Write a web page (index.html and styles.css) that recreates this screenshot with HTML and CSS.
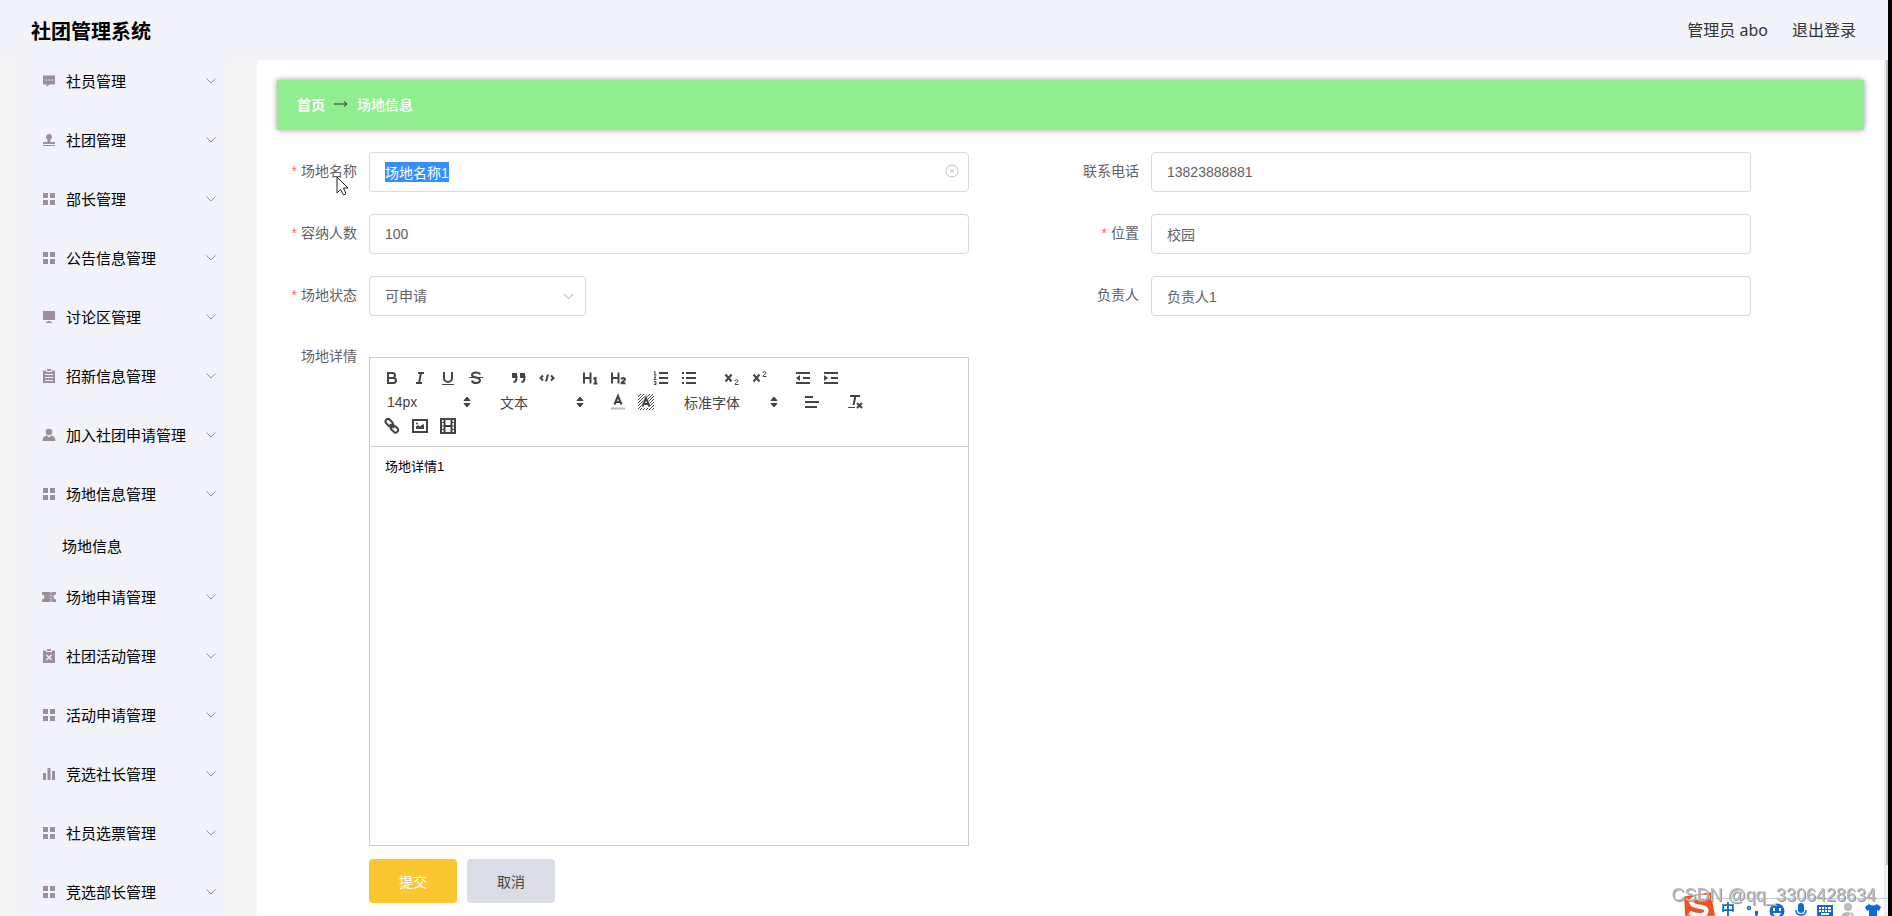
FILE: index.html
```html
<!DOCTYPE html>
<html lang="zh-CN">
<head>
<meta charset="utf-8">
<title>社团管理系统</title>
<link rel="stylesheet" href="styles.css">
</head>
<body>
<svg class="defs" aria-hidden="true">
  <symbol id="grid" viewBox="0 0 14 14"><path d="M1 1h5v5H1zM8 1h5v5H8zM1 8h5v5H1zM8 8h5v5H8z"/></symbol>
  <symbol id="chat" viewBox="0 0 14 14"><path fill-rule="evenodd" d="M1 1.500h12v9H7.500L4.500 13v-2.500H1zM3.500 5.500v1.300h1.300V5.500zM6.400 5.500v1.300h1.300V5.500zM9.300 5.500v1.300h1.300V5.500z"/></symbol>
  <symbol id="stamp" viewBox="0 0 14 14"><path d="M7 1a3 3 0 0 1 1.500 5.600V9H13v2H1V9h4.500V6.600A3 3 0 0 1 7 1zM1 12h12v1H1z"/></symbol>
  <symbol id="screen" viewBox="0 0 14 14"><path d="M1 1h12v9H1zM5.500 11h3v1h1.500v1H4v-1h1.500z"/></symbol>
  <symbol id="order" viewBox="0 0 14 14"><path fill-rule="evenodd" d="M5 0h4v2H5zM1 1.500h3V3h6V1.500h3V14H1zM3 5v1h8V5zM3 8v1h8V8zM3 11v1h8v-1z"/></symbol>
  <symbol id="person" viewBox="0 0 14 14"><circle cx="7" cy="4" r="3.300"/><path d="M.5 13c0-3.500 2-5.200 4.300-5.500L7 9.500l2.200-2c2.300.3 4.300 2 4.300 5.500z"/></symbol>
  <symbol id="ticket" viewBox="0 0 14 14"><path d="M0 2h8.500v1.500h1V2H14v2.500a2.500 2.500 0 0 0 0 5V12H9.500v-1.500h-1V12H0V9.500a2.500 2.500 0 0 0 0-5zM8.500 5v1.500h1V5zM8.500 8v1.500h1V8z" fill-rule="evenodd"/></symbol>
  <symbol id="failed" viewBox="0 0 14 14"><path fill-rule="evenodd" d="M5 0h4v2H5zM1 1.500h3V3h6V1.500h3V14H1zM5 5.500l-1 1L6 8.500l-2 2 1 1 2-2 2 2 1-1-2-2 2-2-1-1-2 2z"/></symbol>
  <symbol id="bars" viewBox="0 0 14 14"><path d="M1 6h3v7H1zM5.500 1h3v12h-3zM10 4h3v9h-3z"/></symbol>
  <symbol id="down" viewBox="0 0 12 12"><path d="M1.500 3.500 6 8l4.500-4.500" fill="none" stroke="currentColor"/></symbol>
  <symbol id="updown" viewBox="0 0 18 18"><path d="M6 7.500 9 4l3 3.500zM6 10.500 9 14l3-3.500z" fill="currentColor" stroke="currentColor" stroke-linejoin="round"/></symbol>
</svg>

<div class="shell">
  <header class="header">
    <h1 class="brand">社团管理系统</h1>
    <nav class="user"><span>管理员 abo</span><a href="#">退出登录</a></nav>
  </header>

  <div class="body">
    <aside class="sidebar">
      <ul class="menu">
        <li><a class="item" href="#"><svg class="ico"><use href="#chat"/></svg><span>社员管理</span><svg class="arrow"><use href="#down"/></svg></a></li>
        <li><a class="item" href="#"><svg class="ico"><use href="#stamp"/></svg><span>社团管理</span><svg class="arrow"><use href="#down"/></svg></a></li>
        <li><a class="item" href="#"><svg class="ico"><use href="#grid"/></svg><span>部长管理</span><svg class="arrow"><use href="#down"/></svg></a></li>
        <li><a class="item" href="#"><svg class="ico"><use href="#grid"/></svg><span>公告信息管理</span><svg class="arrow"><use href="#down"/></svg></a></li>
        <li><a class="item" href="#"><svg class="ico"><use href="#screen"/></svg><span>讨论区管理</span><svg class="arrow"><use href="#down"/></svg></a></li>
        <li><a class="item" href="#"><svg class="ico"><use href="#order"/></svg><span>招新信息管理</span><svg class="arrow"><use href="#down"/></svg></a></li>
        <li><a class="item" href="#"><svg class="ico"><use href="#person"/></svg><span>加入社团申请管理</span><svg class="arrow"><use href="#down"/></svg></a></li>
        <li><a class="item" href="#"><svg class="ico"><use href="#grid"/></svg><span>场地信息管理</span><svg class="arrow"><use href="#down"/></svg></a>
          <a class="subitem" href="#">场地信息</a></li>
        <li><a class="item" href="#"><svg class="ico"><use href="#ticket"/></svg><span>场地申请管理</span><svg class="arrow"><use href="#down"/></svg></a></li>
        <li><a class="item" href="#"><svg class="ico"><use href="#failed"/></svg><span>社团活动管理</span><svg class="arrow"><use href="#down"/></svg></a></li>
        <li><a class="item" href="#"><svg class="ico"><use href="#grid"/></svg><span>活动申请管理</span><svg class="arrow"><use href="#down"/></svg></a></li>
        <li><a class="item" href="#"><svg class="ico"><use href="#bars"/></svg><span>竞选社长管理</span><svg class="arrow"><use href="#down"/></svg></a></li>
        <li><a class="item" href="#"><svg class="ico"><use href="#grid"/></svg><span>社员选票管理</span><svg class="arrow"><use href="#down"/></svg></a></li>
        <li><a class="item" href="#"><svg class="ico"><use href="#grid"/></svg><span>竞选部长管理</span><svg class="arrow"><use href="#down"/></svg></a></li>
      </ul>
    </aside>

    <main class="main">
      <nav class="crumbs">
        <a href="#">首页</a>
        <svg class="crumb-arrow" viewBox="0 0 14 10"><path d="M0 5h13M10 2.500 13 5l-3 2.500" fill="none" stroke="currentColor"/></svg>
        <span>场地信息</span>
      </nav>

      <form class="form">
        <div class="field">
          <label class="required" for="name">场地名称</label>
          <div class="control">
            <input id="name" type="text" value="场地名称1">
            <button class="clear" type="button" aria-label="清空"><svg viewBox="0 0 14 14"><g fill="none" stroke="currentColor"><circle cx="7" cy="7" r="6"/><path d="m5 5 4 4M9 5 5 9"/></g></svg></button>
          </div>
        </div>
        <div class="field">
          <label for="phone">联系电话</label>
          <div class="control"><input id="phone" type="text" value="13823888881"></div>
        </div>
        <div class="field">
          <label class="required" for="capacity">容纳人数</label>
          <div class="control"><input id="capacity" type="text" value="100"></div>
        </div>
        <div class="field">
          <label class="required" for="place">位置</label>
          <div class="control"><input id="place" type="text" value="校园"></div>
        </div>
        <div class="field">
          <label class="required" for="state">场地状态</label>
          <div class="control short">
            <select id="state"><option>可申请</option></select>
            <svg class="select-arrow"><use href="#down"/></svg>
          </div>
        </div>
        <div class="field">
          <label for="owner">负责人</label>
          <div class="control"><input id="owner" type="text" value="负责人1"></div>
        </div>
        <div class="field detail">
          <label for="detail">场地详情</label>
          <div class="editor">
            <div class="toolbar">
              <div class="group">
                <button type="button" aria-label="加粗"><svg viewBox="0 0 18 18"><path d="M5 4h4.500a2.500 2.500 0 0 1 0 5H5zM5 9h5.500a2.500 2.500 0 0 1 0 5H5z"/></svg></button>
                <button type="button" aria-label="斜体"><svg viewBox="0 0 18 18"><path d="M7 4h6M5 14h6M8 14l2-10"/></svg></button>
                <button type="button" aria-label="下划线"><svg viewBox="0 0 18 18"><path d="M5 3v6a4 4 0 0 0 8 0V3"/><path class="thin" d="M3 15.500h12"/></svg></button>
                <button type="button" aria-label="删除线"><svg viewBox="0 0 18 18"><path class="thin" d="M2 8.500h14"/><path d="M13 5.500C12.500 4 11 3.500 9 3.500c-2.500 0-4 1-4 2.500 0 1.300 1.500 2 4 2.500s4 1.200 4 2.800c0 1.700-1.700 2.700-4 2.700-2 0-3.700-.7-4-2.500"/></svg></button>
              </div>
              <div class="group">
                <button type="button" aria-label="引用"><svg viewBox="0 0 18 18"><path class="fill" d="M2 4h5v5H2zM10 4h5v5h-5z"/><path d="M6.500 6.500V8c0 3-1 5-3 5M14.500 6.500V8c0 3-1 5-3 5"/></svg></button>
                <button type="button" aria-label="代码"><svg viewBox="0 0 18 18"><path d="M5 6.500 2.500 9 5 11.500M13 6.500 15.500 9 13 11.500M10 5.500l-2 7"/></svg></button>
              </div>
              <div class="group">
                <button type="button" aria-label="标题一"><svg viewBox="0 0 18 18"><path d="M3 3.500v11M9.500 3.500v11M3 9h6.500M12.500 10l2-1v5.500M12.500 14.500h4"/></svg></button>
                <button type="button" aria-label="标题二"><svg viewBox="0 0 18 18"><path d="M3 3.500v11M9.500 3.500v11M3 9h6.500"/><path d="M12.500 10.500c0-2 3.500-2 3.500 0 0 1.200-3.500 2-3.500 3.700h4"/></svg></button>
              </div>
              <div class="group">
                <button type="button" aria-label="有序列表"><svg viewBox="0 0 18 18"><path d="M7 4h9M7 9h9M7 14h9"/><path class="thin" d="m2 3 1-.5V6M2 6h2.500M2 8h2L2 10.500h2.500M2 12.500h2v3H2M2.500 14H4"/></svg></button>
                <button type="button" aria-label="无序列表"><svg viewBox="0 0 18 18"><path d="M6 4h10M6 9h10M6 14h10M2 4h2M2 9h2M2 14h2"/></svg></button>
              </div>
              <div class="group">
                <button type="button" aria-label="下标"><svg viewBox="0 0 18 18"><path d="m2.500 5.500 6 7M8.500 5.500l-6 7"/><path class="thin" d="M12 12c0-1.800 3-1.800 3 0 0 1-3 1.500-3 3.500h3.500"/></svg></button>
                <button type="button" aria-label="上标"><svg viewBox="0 0 18 18"><path d="m2.500 5.500 6 7M8.500 5.500l-6 7"/><path class="thin" d="M12 4c0-1.800 3-1.800 3 0 0 1-3 1.500-3 3.500h3.500"/></svg></button>
              </div>
              <div class="group">
                <button type="button" aria-label="减少缩进"><svg viewBox="0 0 18 18"><path d="M2 4h14M9 9h7M2 14h14"/><path class="fill" d="M6 6v6L2 9z"/></svg></button>
                <button type="button" aria-label="增加缩进"><svg viewBox="0 0 18 18"><path d="M2 4h14M9 9h7M2 14h14"/><path class="fill" d="M2 6v6l4-3z"/></svg></button>
              </div>
              <div class="group"><button class="picker" type="button">14px<svg viewBox="0 0 18 18"><use href="#updown"/></svg></button></div>
              <div class="group"><button class="picker" type="button">文本<svg viewBox="0 0 18 18"><use href="#updown"/></svg></button></div>
              <div class="group">
                <button type="button" aria-label="文字颜色"><svg viewBox="0 0 18 18"><path d="M5.500 11.500 9 3l3.500 8.500M6.800 9h4.400"/><path class="pale" d="M2 15.500h14"/></svg></button>
                <button type="button" aria-label="背景颜色"><svg viewBox="0 0 18 18"><path class="thin" d="M1 4l3-3M1 7l6-6M1 10l9-9M1 13 13 1M1 16 16 1M3 17 17 3M6 17 17 6M9 17l8-8M12 17l5-5M15 17l2-2"/><path class="halo" d="M6.500 13 9 6l2.500 7z"/><path d="M5.500 13.500 9 5l3.500 8.500M6.800 11h4.400"/></svg></button>
              </div>
              <div class="group"><button class="picker wide" type="button">标准字体<svg viewBox="0 0 18 18"><use href="#updown"/></svg></button></div>
              <div class="group"><button type="button" aria-label="对齐"><svg viewBox="0 0 18 18"><path d="M2 4h8M2 9h14M2 14h12"/></svg></button></div>
              <div class="group"><button type="button" aria-label="清除格式"><svg viewBox="0 0 18 18"><path d="M4 3h10M9.500 3 7.500 12M11 10l5 5M16 10l-5 5"/><path class="thin" d="M2 14.500h7"/></svg></button></div>
              <div class="group">
                <button type="button" aria-label="链接"><svg viewBox="0 0 18 18"><rect x="-4.500" y="-2.500" width="8" height="5" rx="2.500" transform="translate(6.500 6) rotate(45)"/><rect x="-4" y="-2.500" width="8" height="5" rx="2.500" transform="translate(11.500 12) rotate(45)"/><path d="m7 7 4 4"/></svg></button>
                <button type="button" aria-label="图片"><svg viewBox="0 0 18 18"><path d="M2 3h14v12H2z"/><path class="fill" d="M5 12V9.500l2-1.500 2 1.500L12 7l1 1v4z"/><circle class="fill" cx="6" cy="6.500" r="1"/></svg></button>
                <button type="button" aria-label="视频"><svg viewBox="0 0 18 18"><path d="M2 2h14v14H2zM5.500 2v14M12.500 2v14M6 9h6"/><path class="thin" d="M2 5.500h3M2 9h3M2 12.500h3M13 5.500h3M13 9h3M13 12.500h3"/></svg></button>
              </div>
            </div>
            <textarea id="detail">场地详情1</textarea>
          </div>
        </div>
        <div class="actions">
          <button class="btn primary" type="submit">提交</button>
          <button class="btn" type="button">取消</button>
        </div>
      </form>
    </main>
    <div class="scroll"><div class="thumb"></div></div>
  </div>
</div>

<svg class="cursor" viewBox="0 0 13 20"><path d="M1 1v16l3.500-3.500L7.500 19l2.500-1.300L7.500 12H12z" fill="#fff" stroke="#222"/></svg>

<div class="ime">
  <svg class="sogou" viewBox="0 0 30 22"><path d="M1 4 26 0l4 22H2z" fill="#f1501f"/><path d="M25 5C17 3 7 5 8 10s14 2 14 7-8 6-16 2" fill="none" stroke="#fff" stroke-width="4"/></svg>
  <div class="tray">
    <span class="lang">中</span>
    <svg viewBox="0 0 16 16"><circle cx="4" cy="5" r="1.500" fill="none" stroke="currentColor" stroke-width="1.500"/><path d="M10 8h3v3l-2 4h-1.500l1-3H10z"/></svg>
    <svg viewBox="0 0 16 16"><circle cx="8" cy="8" r="7.500"/><path d="M4 5h2v3H4zM10 5h2v3h-2zM4 10h8q-1 3.500-4 3.500T4 10" fill="#fff"/></svg>
    <svg viewBox="0 0 16 16"><rect x="5" y="0" width="6" height="10" rx="3"/><path d="M3 7q0 5 5 5t5-5M8 12v3" fill="none" stroke="currentColor" stroke-width="1.500"/></svg>
    <svg viewBox="0 0 16 16"><path fill-rule="evenodd" d="M0 2h16v12H0zM2 4v2h2V4zM5 4v2h2V4zM8 4v2h2V4zM11 4v2h3V4zM2 7v2h2V7zM5 7v2h2V7zM8 7v2h2V7zM11 7v2h3V7zM4 10v2h8v-2z"/></svg>
    <svg class="muted" viewBox="0 0 16 16"><circle cx="7" cy="4" r="4"/><path d="M0 15q0-6 7-6t8 6z"/><text x="7" y="13" font-size="8" fill="#fff">16</text></svg>
    <svg viewBox="0 0 16 16"><path d="M4 1q4 3 8 0l4 3-2 4-2-1v9H4V7L2 8 0 4z"/></svg>
  </div>
</div>
<div class="watermark">CSDN @qq_3306428634</div>
<script src="main.js"></script>
</body>
</html>
```
FILE: styles.css
```css
* { box-sizing: border-box; }
body {
  margin: 0;
  border-right: 4px solid #000;
  font-family: "Liberation Sans", "Noto Sans CJK SC", sans-serif;
  font-size: 14px;
  color: #606266;
  background: #fff;
}
a { color: inherit; text-decoration: none; }
button, input, select, textarea { font: inherit; color: inherit; outline: none; }
button { border: 0; padding: 0; background: none; cursor: pointer; }
.defs { display: none; }

.shell { display: flex; flex-direction: column; height: 100vh; overflow: hidden; }
.header {
  flex: none;
  display: flex;
  align-items: center;
  justify-content: space-between;
  height: 60px;
  padding: 0 32px 0 31px;
  background: #f2f3f9;
}
.brand { margin: 0; font-size: 20px; font-weight: 700; color: #000; }
.user { display: flex; gap: 24px; padding-bottom: 2px; font-family: "Noto Sans", "Noto Sans CJK SC", sans-serif; font-size: 16px; color: #333; }
.body { flex: 1; display: flex; min-height: 0; }

.sidebar { flex: none; width: 257px; padding: 0 29px 0 18px; background: #f4f4f4; overflow: hidden; }
.menu { margin: -9px 0 0; padding: 0; list-style: none; background: #f2f3f9; font-size: 15px; color: #000; }
.item { display: flex; align-items: center; gap: 10px; height: 59px; padding: 0 11px 0 24px; }
.ico { width: 14px; height: 14px; fill: #9d8f99; }
.arrow { width: 12px; height: 12px; margin-left: auto; color: #909399; }
.subitem { display: flex; align-items: center; height: 44px; padding-left: 44px; }

.main { flex: 1; min-width: 0; padding: 20px; overflow: hidden; }
.crumbs {
  display: flex;
  align-items: center;
  gap: 9px;
  height: 50px;
  padding: 0 20px 2px;
  background: #90ee90;
  box-shadow: 0 0 6px rgba(0, 0, 0, 0.4);
  color: #fff;
  font-weight: 500;
}
.crumbs a { font-weight: 700; }
.crumb-arrow { width: 14px; height: 10px; color: #303133; }

.form { display: grid; grid-template-columns: 1fr 1fr; row-gap: 22px; padding: 22px 11px 0 12px; }
.field { display: flex; padding-right: 102px; }
.field label { flex: none; width: 80px; padding-right: 12px; line-height: 38px; text-align: right; white-space: nowrap; }
.required::before { content: "*"; margin-right: 4px; color: #f56c6c; }
.control { position: relative; flex: 1; height: 40px; }
.control.short { flex: none; width: 217px; }
.control input, .control select {
  width: 100%;
  height: 40px;
  padding: 0 15px;
  border: 1px solid #d8dade;
  border-radius: 4px;
  background: #fff;
}
.control select { appearance: none; }
.control input::selection { background: #3390ff; color: #fff; }
.clear { position: absolute; top: 12px; right: 10px; width: 14px; height: 14px; color: #c0c4cc; }
.clear svg { display: block; }
.select-arrow { position: absolute; top: 14px; right: 11px; width: 13px; height: 13px; color: #c0c4cc; pointer-events: none; }

.detail label { line-height: 36px; }
.editor { flex: 1; min-width: 0; margin-top: 19px; border: 1px solid #ccc; }
.toolbar { display: flex; flex-wrap: wrap; padding: 8px; border-bottom: 1px solid #ccc; color: #444; }
.group { display: flex; margin-right: 15px; }
.toolbar button { display: flex; align-items: center; justify-content: center; width: 28px; height: 24px; }
.toolbar svg { width: 18px; height: 18px; fill: none; stroke: #444; stroke-width: 2; }
.toolbar .thin { stroke-width: 1; }
.toolbar .fill { fill: #444; stroke: none; }
.toolbar .pale { stroke: #bbb; }
.toolbar .halo { fill: #fff; stroke: #fff; stroke-width: 4; }
.toolbar .picker { width: 98px; justify-content: space-between; padding-left: 9px; }
.toolbar .picker.wide { width: 108px; }
.toolbar .picker svg { stroke-width: 1; }
.editor textarea {
  display: block;
  width: 100%;
  height: 398px;
  padding: 10px 15px;
  border: 0;
  resize: none;
  font-size: 13px;
  line-height: 20px;
  color: #000;
}

.actions { grid-column: 1 / -1; display: flex; gap: 10px; margin-top: -9px; padding-left: 80px; }
.btn { width: 88px; height: 44px; border-radius: 4px; background: #dadde5; color: #444; }
.btn.primary { background: #fbc730; color: #fff; }

.scroll { flex: none; width: 4px; border-left: 2px solid #ececec; background: #f2f2f2; }
.thumb { height: 94%; background: #c1c1c1; }

.cursor { position: absolute; left: 336px; top: 176px; width: 13px; height: 20px; }
.ime { position: fixed; right: 4px; bottom: 0; display: flex; align-items: flex-end; height: 24px; overflow: hidden; color: #0b6bd6; }
.sogou { width: 32px; height: 24px; }
.tray {
  display: flex;
  align-items: flex-start;
  gap: 8px;
  height: 18px;
  padding: 4px 7px 0 6px;
  border-top: 1px solid #bcd3e6;
}
.tray svg { flex: none; width: 16px; height: 16px; fill: currentColor; }
.tray .muted { color: #bbb; }
.lang { width: 16px; font-size: 14px; line-height: 13px; font-weight: 700; }
.watermark {
  position: fixed;
  right: 16px;
  bottom: 10px;
  font-size: 18px;
  line-height: 22px;
  color: #bcbcbc;
  text-shadow: 1px 1px 0 #999;
}
```
FILE: main.js
```js
const nameInput = document.getElementById('name');
nameInput.focus();
nameInput.select();
```
